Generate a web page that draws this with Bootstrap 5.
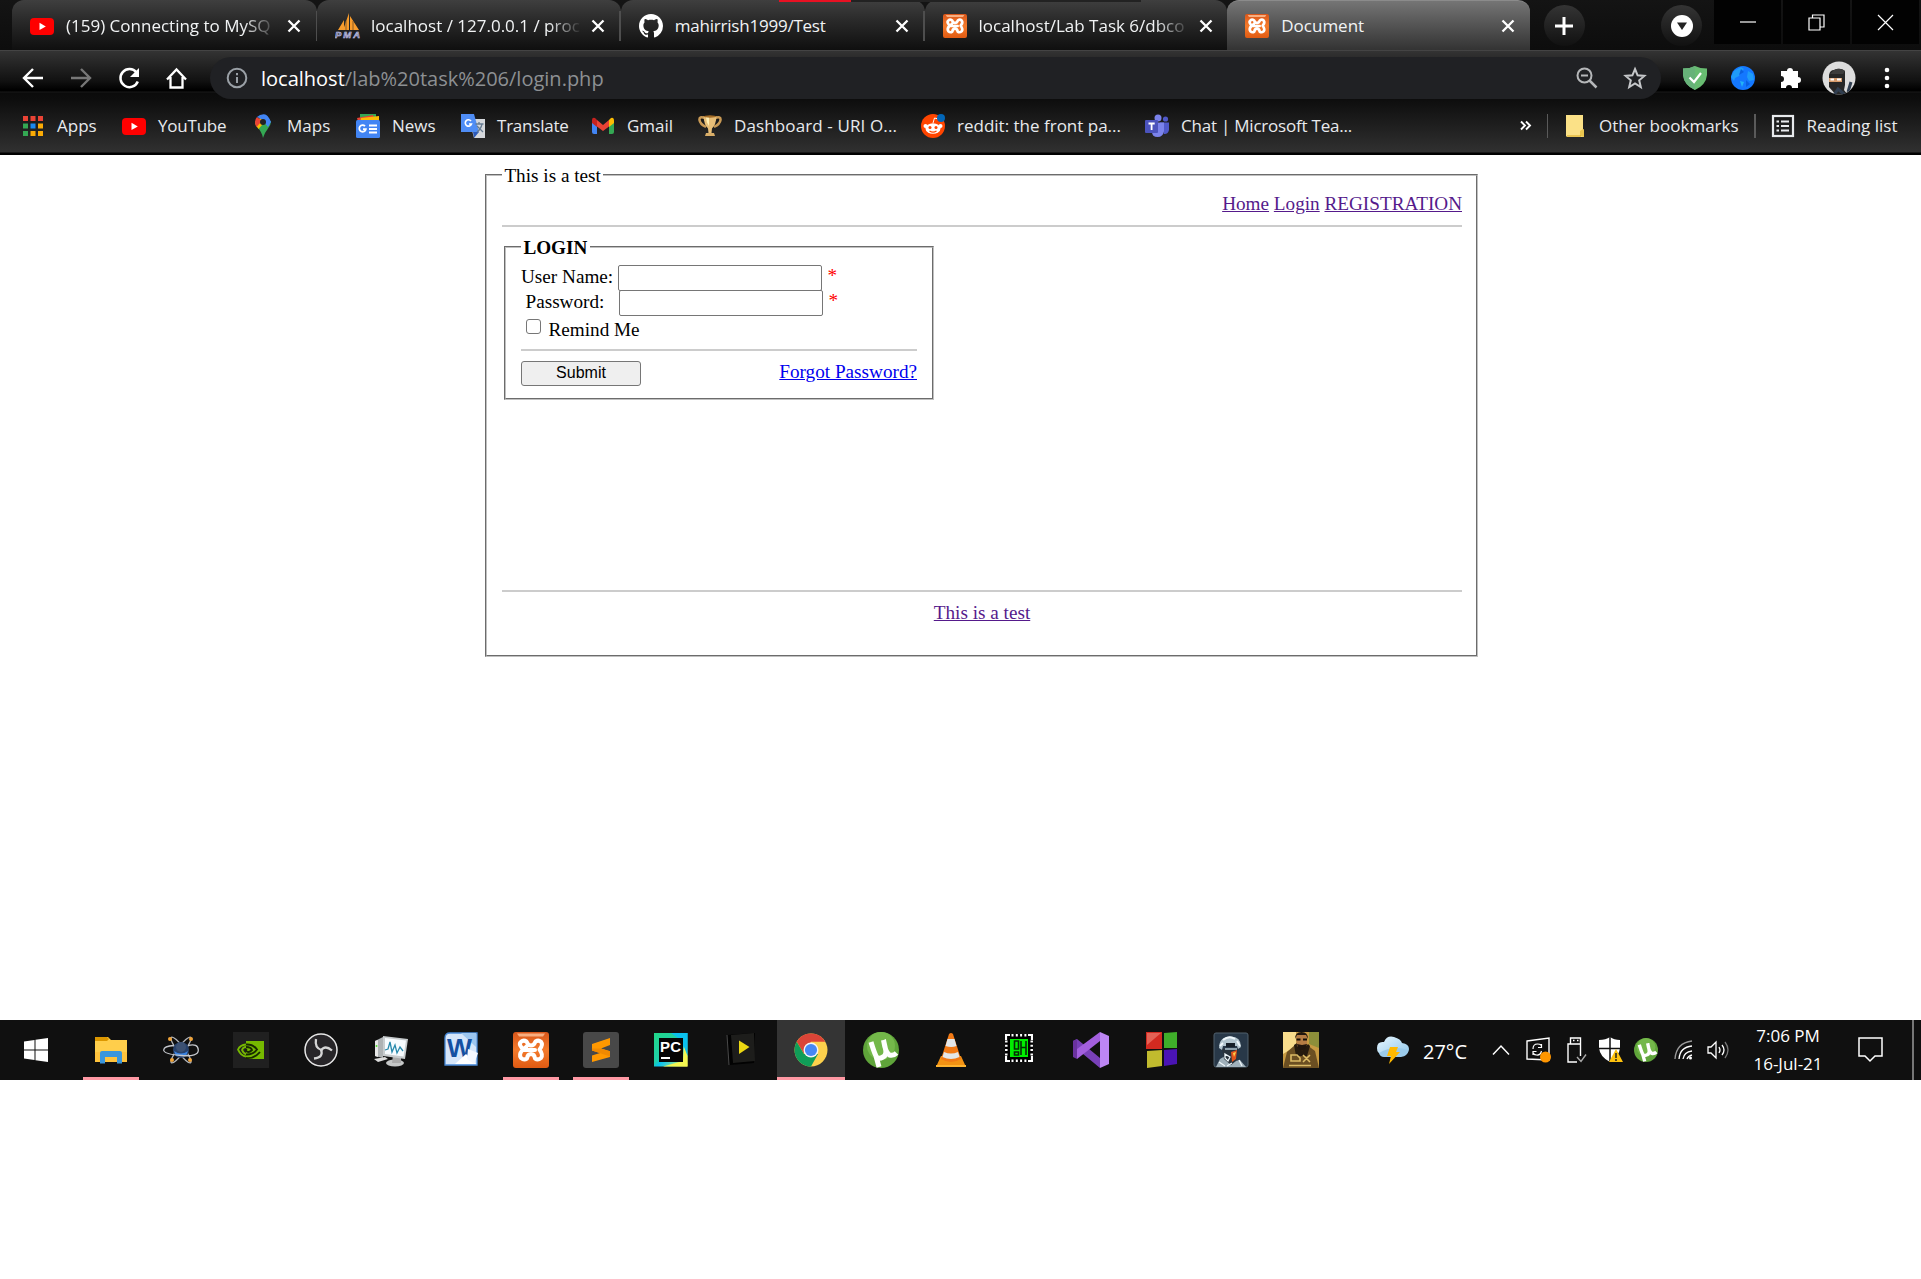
<!DOCTYPE html>
<html lang="en">
<head>
<meta charset="utf-8">
<meta name="viewport" content="width=device-width, initial-scale=1">
<title>Document</title>
<link rel="stylesheet" href="https://cdn.jsdelivr.net/npm/bootstrap@5.3.0/dist/css/bootstrap.min.css">
<style>
  body{background:#fff;color:#000;overflow:hidden;font-family:"Open Sans","Noto Sans",sans-serif;font-size:17px;line-height:24px}
  svg{display:block;flex:none}
  .strip{height:50px;background:linear-gradient(#141414,#0d0d0d);padding-left:12px}
  .tab-item{width:303.75px;height:50px;padding:1px 0 0 18px;background:linear-gradient(#3f3f3f,#2a2a2a 40%,#0f0f0f);border-radius:12px 12px 0 0;color:#f1f3f4;border-right:0;flex:none}
  .tab-first{width:305px}
  .tab-item .tab-name{width:211px;margin-left:12px;white-space:nowrap}
  .tab-item .fade-end{-webkit-mask-image:linear-gradient(90deg,#000 84%,transparent)}
  .tab-item .tab-x{margin-left:9px}
  .tab-first .tab-x{margin-left:10px}
  .tab-sep{width:1.5px;height:30px;background:#4e4e4e;margin-left:auto}
  .tab-on{width:302.500px;background:linear-gradient(#757575,#5a5a5a 40%,#333);border-top:1px solid #8b8b8b;padding-top:0}
  .round-btn{width:41px;height:41px;border-radius:50%;background:linear-gradient(#343434,#111);margin-top:5px;flex:none}
  .win-btns{width:207px;height:44px;margin-left:12px}
  .win-btns>div{width:67px;background:#020202;margin-right:2px}
  .edge-marks{left:779px;top:0;height:2px;width:362px;background:linear-gradient(90deg,#e81123 72px,#222 72px)}
  .toolbar-row{height:49px;border-top:1px solid #444;background:linear-gradient(#333,#111 30px,#000 39px,#000 40px,#191919 41px,#0b0b0b 42px,#0d0d0d)}
  .nav-icons{padding-left:21px;width:210px;padding-top:5px}
  .address{width:1451px;height:42px;margin-top:6px;border-radius:21px;background:#202124;padding:0 14px 0 15px;color:#8d9093;font-size:20px;line-height:30px}
  .address b{font-weight:400;color:#fff}
  .ext-icons{padding-top:5px}
  .bookmarks{height:56px;background:linear-gradient(#0d0d0d,#303030 53px,#000 54px);padding:0 0 2px 21px;color:#e8eaed;white-space:nowrap}
  .bookmarks .bm{gap:12px;flex:none}
  .snug{letter-spacing:-.22px}
  .bm-sep{width:1.5px;height:24px;background:#5a5a5a}
  .page-view{height:865px;padding:9px 0 0 485px;font-family:"Liberation Serif",serif;font-size:19.2px;line-height:22px}
  .page-view fieldset{border:2px groove #c0c0c0;margin:0}
  .page-view legend{float:none;width:auto;font-size:19.2px;line-height:24px;height:22px;margin:0;padding:0 2.4px;white-space:nowrap}
  .page-view a{color:#551a8b;text-decoration:underline}
  .page-view a.fresh{color:#00e}
  .outer-set{width:993px;height:493px;padding:7px 14px 0 15px}
  .inner-set{width:430px;height:164px;padding:7px 15px 0;margin:9px 0 0 2px!important}
  .rule{height:2px;background:#ccc}
  .text-box{width:203.5px;height:25.5px;border:1px solid #767676;border-radius:2px;padding:0 3px;outline:0;background:#fff}
  .tick{width:15px;height:15px;border:1.4px solid #767676;border-radius:3px;appearance:none;margin:3px 7.5px 0 5px;background:#fff}
  .star{color:red;margin-left:6px}
  .send{width:120px;height:25px;border:1px solid #767676;border-radius:3px;background:#efefef;font:16px/21px "Liberation Sans",sans-serif;padding:0 0 2px}
  .taskbar{height:60px;background:#101010;color:#fff}
  .start-cell{width:76px;padding-left:24px}
  .app-cell{width:70px;height:60px;padding:0 7px}
  .app-cell>div{height:60px;border-bottom:3px solid transparent;padding-top:3px}
  .app-cell.open>div{border-color:#ff99a4}
  .app-cell.active{padding:0 1px}
  .app-cell.active>div{background:#343434}
  .clock{line-height:28px;font-size:17px;width:90px;margin-left:13px}
  .temp{font-size:20px}
</style>
</head>
<body>
<svg width="0" height="0" class="position-absolute">
  <defs>
    <linearGradient id="gOr" x2="0" y2="1"><stop offset="0" stop-color="#d9561a"/><stop offset=".5" stop-color="#f47b2c"/><stop offset="1" stop-color="#e05a12"/></linearGradient>
    <linearGradient id="gTile" x2="1" y2="1"><stop stop-color="#21d789"/><stop offset=".45" stop-color="#1fd0a8"/><stop offset=".55" stop-color="#07c3f2"/><stop offset="1" stop-color="#fcf84a"/></linearGradient>
    <linearGradient id="gSky" x2="1" y2="1"><stop stop-color="#e8f6ff"/><stop offset="1" stop-color="#8ec7ea"/></linearGradient>
    <symbol id="xampp" viewBox="0 0 36 36"><rect width="36" height="36" rx="3" fill="url(#gOr)"/><path d="M4 1.500h28l-2 3H6z" fill="#f8ae80"/><path d="M13.500 14.500Q11 18 8.500 15.500Q5.500 12 8 9.800Q10.500 7.500 13.500 9.500Q15 13.500 18 13.500Q21 13.500 22.500 9.500Q25.500 7.500 28 9.800Q30.500 13 26.500 17.500Q30.500 23 28 26Q25 28.500 22 26.500Q21.500 22 18 22Q14.500 22 14 26.500Q11 28.500 8 26Q5.500 22.500 9.500 18H22" fill="none" stroke="#fff" stroke-width="4" stroke-linecap="round" stroke-linejoin="round"/></symbol>
    <symbol id="yt" viewBox="0 0 24 24"><rect y="4" width="24" height="17" rx="4" fill="red"/><path d="M9.500 8.800v7.200l6.300-3.600z" fill="#fff"/></symbol>
    <symbol id="cross" viewBox="0 0 14 14"><path d="M1.500 1.500l11 11M12.500 1.500l-11 11" stroke="#fff" stroke-width="2.300"/></symbol>
    <symbol id="ut" viewBox="0 0 36 36"><circle cx="18" cy="18" r="18" fill="#5fa43a"/><circle cx="18" cy="14" r="14" fill="#74b84a"/><path d="M8 10q3 10 5 14t7 1q4-2 2.500-8l-2-9q2 13 6 15q4 1 7-2M13 24l3 11" stroke="#fff" stroke-width="5" fill="none"/></symbol>
  </defs>
</svg>

<!-- Tab strip -->
<header>
<div class="strip d-flex">
  <div class="tab-item tab-first d-flex align-items-center"><svg width="24" height="24"><use href="#yt"/></svg><div class="tab-name fade-end">(159) Connecting to MySQ</div><svg class="tab-x" width="14" height="14"><use href="#cross"/></svg><div class="tab-sep"></div></div>
  <div class="tab-item d-flex align-items-center"><svg width="26" height="26" viewBox="0 0 26 26"><path d="M3 17l6-10v10zM8 17L14 0v17zM15 3l9 14h-9z" fill="#f89c2c"/><path d="M11 8v9M18 8v9" stroke="#8a5a26"/><text x="0" y="25" font-family="Liberation Sans" font-size="9.500" font-weight="700" font-style="italic" fill="#5a5f9c" stroke="#d5d5ee" stroke-width=".5" textLength="25">PMA</text></svg><div class="tab-name fade-end" style="margin-left:10px">localhost / 127.0.0.1 / proc</div><svg class="tab-x" width="14" height="14"><use href="#cross"/></svg><div class="tab-sep"></div></div>
  <div class="tab-item d-flex align-items-center"><svg width="24" height="24" viewBox="0 0 16 16" fill="#fff"><path d="M8 0C3.580 0 0 3.580 0 8c0 3.540 2.290 6.530 5.470 7.590.4.070.55-.17.55-.38 0-.19-.01-.82-.01-1.490-2.010.37-2.530-.49-2.690-.94-.09-.23-.48-.94-.82-1.130-.28-.15-.68-.52-.01-.53.63-.01 1.080.58 1.230.82.72 1.210 1.870.87 2.330.66.07-.52.28-.87.51-1.070-1.780-.2-3.640-.89-3.640-3.950 0-.87.31-1.590.82-2.150-.08-.2-.36-1.020.08-2.120 0 0 .67-.21 2.200.82.64-.18 1.320-.27 2-.27s1.360.09 2 .27c1.530-1.040 2.200-.82 2.200-.82.44 1.100.16 1.920.08 2.120.51.56.82 1.270.82 2.150 0 3.070-1.870 3.750-3.650 3.950.29.25.54.73.54 1.480 0 1.070-.01 1.930-.01 2.200 0 .21.15.46.55.38A8 8 0 0 0 16 8c0-4.420-3.580-8-8-8z"/></svg><div class="tab-name snug">mahirrish1999/Test</div><svg class="tab-x" width="14" height="14"><use href="#cross"/></svg><div class="tab-sep"></div></div>
  <div class="tab-item d-flex align-items-center" style="width:302.750px"><svg width="24" height="24"><use href="#xampp"/></svg><div class="tab-name fade-end">localhost/Lab Task 6/dbco</div><svg class="tab-x" width="14" height="14"><use href="#cross"/></svg></div>
  <div class="tab-item tab-on d-flex align-items-center"><svg width="24" height="24"><use href="#xampp"/></svg><div class="tab-name">Document</div><svg class="tab-x" width="14" height="14"><use href="#cross"/></svg></div>
  <div class="round-btn d-flex align-items-center justify-content-center" style="margin-left:14px"><svg width="18" height="18"><path d="M9 0v18M0 9h18" stroke="#fff" stroke-width="3"/></svg></div>
  <div class="round-btn d-flex align-items-center justify-content-center ms-auto"><svg width="22" height="22"><circle cx="11" cy="11" r="11" fill="#fff"/><path d="M6 7.500h10L11 15z" fill="#222"/></svg></div>
  <div class="win-btns d-flex flex-shrink-0">
    <div class="d-flex align-items-center justify-content-center"><svg width="16" height="16"><path d="M0 8h16" stroke="#fff" stroke-width="1.200"/></svg></div>
    <div class="d-flex align-items-center justify-content-center"><svg width="17" height="17" fill="none" stroke="#fff" stroke-width="1.200"><path d="M1 4h11v12H1zM4.500 4V1H16v12h-4"/></svg></div>
    <div class="d-flex align-items-center justify-content-center me-0"><svg width="17" height="17"><path d="M1 1l15 15M16 1L1 16" stroke="#fff" stroke-width="1.200"/></svg></div>
  </div>
</div>
<div class="edge-marks position-absolute"></div>

<!-- Toolbar -->
<div class="toolbar-row d-flex">
  <div class="nav-icons d-flex align-items-center gap-4">
    <svg width="24" height="24" fill="none" stroke="#fff" stroke-width="2.400"><path d="M22 12H3M12 3l-9 9 9 9"/></svg>
    <svg width="24" height="24" fill="none" stroke="#777" stroke-width="2.400"><path d="M2 12h19M12 3l9 9-9 9"/></svg>
    <svg width="24" height="24" fill="none" stroke="#fff" stroke-width="2.500"><path d="M19.500 6.500a9 9 0 1 0 1.300 9"/><path d="M22 2v9h-9z" fill="#fff" stroke="none"/></svg>
    <svg width="24" height="24" fill="none" stroke="#fff" stroke-width="2.300"><path d="M2 13.500L11.500 3.500 21 13.500M5.500 11v10.500h12V11"/></svg>
  </div>
  <div class="address d-flex align-items-center">
    <svg width="24" height="24" fill="none" stroke="#9aa0a6" stroke-width="2"><circle cx="12" cy="12" r="9.300"/><path d="M12 11v6M12 7v2.200"/></svg>
    <div class="flex-grow-1" style="margin-left:12px;padding-top:1px"><b>localhost</b>/lab%20task%206/login.php</div>
    <svg width="24" height="24" fill="none" stroke="#b5b7b9" stroke-width="2"><circle cx="9.500" cy="9.500" r="7"/><path d="M6 9.500h7"/><path d="M14.500 14.500l7 7" stroke-width="2.500"/></svg>
    <svg class="ms-4" width="24" height="24" fill="none" stroke="#c5c7c9" stroke-width="2"><path d="M12 3l2.600 6.300 6.800.6-5.200 4.400 1.600 6.700L12 17.400 6.200 21l1.600-6.700-5.200-4.400 6.800-.6z"/></svg>
  </div>
  <div class="ext-icons d-flex align-items-center">
    <svg style="margin-left:22px" width="24" height="24"><path d="M12 0Q17 2.500 24 2.500V9Q23 19 12 24Q1 19 0 9V2.500Q7 2.500 12 0z" fill="#68bc71"/><path d="M12 0Q7 2.500 0 2.500V9Q1 19 12 24z" fill="#67b279"/><path d="M6.500 11.500l4.500 4.500 7-9" fill="none" stroke="#fff" stroke-width="2.200"/></svg>
    <svg class="ms-4" width="24" height="24"><circle cx="12" cy="12" r="12" fill="#1478ff"/><path d="M3 5l7-4 3 2-3 3-2 4-4 2-1 3-3-4zM17 5l5 3 1 6-5 1-2-4z" fill="#1f9cf8"/><path d="M9 15l4 1-2 5z" fill="#23b3f5"/><path d="M10 3l3 3-5 3zM15 14l4 4-4 3z" fill="#0a60e0"/></svg>
    <svg style="margin-left:25px" width="22" height="22" fill="#fff"><path d="M7 4a3 3 0 0 1 6 0h5v6a3 3 0 0 1 0 6v5h-6a3 3 0 0 0-6 0H1v-6a3 3 0 0 0 0-6V4z"/></svg>
    <svg style="margin-left:20px" width="34" height="34"><defs><clipPath id="face"><circle cx="17" cy="17" r="16.500"/></clipPath></defs><g clip-path="url(#face)"><rect width="34" height="34" fill="#ddd"/><path d="M7 14Q8 9 12 9Q17 6 23 10V24L22 29L26 34H14L7 26z" fill="#272727"/><path d="M12 9Q19 6 23 10L21 13H8z" fill="#3d3d3d"/><path d="M7 17h13v4H7z" fill="#d79b6b"/><path d="M8.500 18.500h3.500M15 18.500h4" stroke="#fff" stroke-width="2"/><path d="M12 34l4-6 7 6M29 21l-3 10" stroke="#303e50" stroke-width="3" fill="none"/></g></svg>
    <svg style="margin-left:28px" width="6" height="22" fill="#fff"><circle cx="3" cy="3" r="2.300"/><circle cx="3" cy="11" r="2.300"/><circle cx="3" cy="19" r="2.300"/></svg>
  </div>
</div>

<!-- Bookmarks -->
<nav class="bookmarks d-flex align-items-center">
  <div class="bm d-flex align-items-center" style="width:101px"><svg width="24" height="24"><path d="M2 2h5v5H2zM9.500 2h5v5h-5zM17 2h5v5h-5z" fill="#ea4335"/><path d="M2 9.500h5v5H2z" fill="#34a853"/><path d="M9.500 9.500h5v5h-5z" fill="#1a88f0"/><path d="M17 9.500h5v5h-5zM9.500 17h5v5h-5zM17 17h5v5h-5z" fill="#fbab05"/><path d="M2 17h5v5H2z" fill="#34a853"/></svg>Apps</div>
  <div class="bm d-flex align-items-center snug" style="width:129px"><svg width="24" height="24"><use href="#yt"/></svg>YouTube</div>
  <div class="bm d-flex align-items-center" style="width:105px"><svg width="24" height="24"><path d="M12 24Q11 18 6 13Q4 10 4 7l8 1 8-1q0 4-3 7.500T12 24z" fill="#34a853"/><path d="M4.200 9Q5 12 7.500 15l8-9L9 4z" fill="#fbbc04"/><path d="M4 8Q4 5 6 3l5 4-5.500 6Q4 11 4 8z" fill="#ea4335"/><path d="M6 3Q9 0 13 .2T20 8l-3 5-4-5-3-3z" fill="#4285f4"/><circle cx="12" cy="8" r="3" fill="#222"/></svg>Maps</div>
  <div class="bm d-flex align-items-center" style="width:105px"><svg width="24" height="24"><path d="M4 0h16v8H4z" fill="#34a853"/><path d="M1 4l16-3 2 6-16 4z" fill="#ea4335"/><path d="M5 4l18-2v7H4z" fill="#fbbc04"/><rect y="6" width="24" height="18" rx="1.500" fill="#4285f4"/><path d="M9 12.200a3.300 3.300 0 1 0 .8 3H7M13 11.500h8M13 15h8M13 18.500h8" fill="none" stroke="#fff" stroke-width="1.800"/></svg>News</div>
  <div class="bm d-flex align-items-center snug" style="width:130px"><svg width="24" height="24"><path d="M8 5h16v19H13z" fill="#d5d8dc"/><path d="M13 24l-1-6h6z" fill="#2b59b8"/><path d="M0 0h13l5 18H0z" fill="#4f8df5"/><path d="M10 7a3.200 3.200 0 1 0 .5 3H8" fill="none" stroke="#fff" stroke-width="1.600"/><path d="M14.500 10h8M18 8v2M21 10q-1 5-5 8M16 12l6 6" stroke="#667b91" fill="none" stroke-width="1.300"/></svg>Translate</div>
  <div class="bm d-flex align-items-center" style="width:107px"><svg width="24" height="24"><path d="M1 7h5v13H3q-2 0-2-2z" fill="#4285f4"/><path d="M18 7h5v11q0 2-2 2h-3z" fill="#34a853"/><path d="M18 6l2-2q3-1 3 3v2l-5 4z" fill="#fbbc04"/><path d="M6 6l6 5 6-5v6.500L12 17l-6-4.500z" fill="#ea4335"/><path d="M1 9V6q0-3 3-2l2 2v7z" fill="#c5221f"/></svg>Gmail</div>
  <div class="bm d-flex align-items-center" style="width:223px;letter-spacing:.12px"><svg width="24" height="24"><path d="M7 4Q1 2 1.500 6t6.500 7M17 4q6-2 5.500 2T16 13" fill="none" stroke="#c99a55" stroke-width="2.500"/><path d="M5.500 2h13Q18 11 14 14.500l-.5 4.500h-3l-.5-4.500Q6 11 5.500 2z" fill="#e8bf78"/><path d="M8 3h3v9Q8 8 8 3z" fill="#fff0b5"/><ellipse cx="12" cy="2.500" rx="6.500" ry="1.200" fill="#a26b26"/><path d="M8 19h8l1 3H7z" fill="#d8ad68"/></svg>Dashboard - URI O...</div>
  <div class="bm d-flex align-items-center" style="width:224px"><svg width="24" height="24"><circle cx="12" cy="12" r="12" fill="#ff4500"/><ellipse cx="12" cy="14.500" rx="7.500" ry="5.300" fill="#fff"/><circle cx="4.500" cy="12" r="2" fill="#fff"/><circle cx="19.500" cy="12" r="2" fill="#fff"/><path d="M12 9l1.500-5 4 1" stroke="#fff" fill="none"/><circle cx="9" cy="13.500" r="1.500" fill="#ff4500"/><circle cx="15" cy="13.500" r="1.500" fill="#ff4500"/><path d="M8.500 17q3.500 2.300 7 0" stroke="#ff4500" fill="none" stroke-width="1.200"/><circle cx="20" cy="4" r="4" fill="#0266b8"/></svg>reddit: the front pa...</div>
  <div class="bm d-flex align-items-center snug" style="width:230px"><svg width="24" height="24"><circle cx="20.500" cy="5" r="2.600" fill="#5059c9"/><circle cx="13" cy="4" r="3.500" fill="#7b83eb"/><path d="M15 8.500h9V16q-1 4.500-5 4z" fill="#5059c9"/><path d="M7 8.500h12V17q-1 6-6.500 6T7 18z" fill="#7b83eb"/><rect y="6" width="13" height="13" rx="1" fill="#4b53bc"/><path d="M3.500 9.500h6.200M6.600 9.500V16" stroke="#fff" stroke-width="1.800"/></svg>Chat | Microsoft Tea...</div>
  <svg class="ms-auto" width="12" height="12" fill="none" stroke="#fff" stroke-width="1.900"><path d="M1 1.500L5 5.500 1 9.500M6 1.500l4 4-4 4"/></svg>
  <div class="bm-sep" style="margin-left:15px"></div>
  <div class="bm d-flex align-items-center" style="width:187px;margin-left:15px"><svg width="24" height="24"><path d="M3 1h17v14l1 1v7H4l-1-1z" fill="#fbe187"/><path d="M20 15l-3 2v5l4 1v-7z" fill="#eac64f"/><path d="M4 22h14" stroke="#d9a91e"/></svg>Other bookmarks</div>
  <div class="bm-sep ms-1"></div>
  <div class="bm d-flex align-items-center" style="width:150.500px;margin-left:15px"><svg width="24" height="24" fill="none" stroke="#e8eaed" stroke-width="2.200"><rect x="2" y="2" width="20" height="20"/><path d="M10 7.500h8M10 12h8M10 16.500h8M5.500 7.500H8M5.500 12H8M5.500 16.500H8" stroke-width="2"/></svg>Reading list</div>
</nav>
</header>

<!-- Page content -->
<main class="page-view">
  <fieldset class="outer-set">
    <legend>This is a test</legend>
    <div class="text-end"><a href="#">Home</a> <a href="#">Login</a> <a href="#">REGISTRATION</a></div>
    <div class="rule" style="margin-top:10px"></div>
    <fieldset class="inner-set">
      <legend><b>LOGIN</b></legend>
      <div class="d-flex" style="height:25px"><span style="width:97px;padding-top:1px">User Name:</span><input class="text-box" type="text"><span class="star">*</span></div>
      <div class="d-flex"><span style="width:98px;padding-left:4.500px;padding-top:1px">Password:</span><input class="text-box" type="password"><span class="star">*</span></div>
      <div class="d-flex" style="height:33.500px"><input class="tick" type="checkbox"><span style="padding-top:3px">Remind Me</span></div>
      <div class="rule"></div>
      <div class="d-flex justify-content-between" style="margin-top:10px"><button class="send">Submit</button><a class="fresh" href="#">Forgot Password?</a></div>
    </fieldset>
    <div class="rule" style="margin-top:190px"></div>
    <div class="text-center" style="margin-top:10px"><a href="#">This is a test</a></div>
  </fieldset>
</main>

<!-- Taskbar -->
<footer class="taskbar d-flex">
  <div class="start-cell d-flex align-items-center"><svg width="24" height="24" fill="#fff"><path d="M0 3.500l10.500-1.500v9.500H0zM11.500 1.800L24 0v11.500H11.500zM0 12.500h10.500V22L0 20.500zM11.500 12.500H24V24l-12.500-1.800z"/></svg></div>
  <div class="app-cell open"><div class="d-flex align-items-center justify-content-center"><svg width="36" height="36"><path d="M2 5h13l3 3h16v22H2z" fill="#ffce4b"/><path d="M2 5h12l2 2-2 2H2z" fill="#dc9700"/><path d="M2 20h32v10H2z" fill="#ffc33c"/><path d="M7 31.500V21q0-2 2-2h18q2 0 2 2v10.500h-5V25h-12v6.500z" fill="#3a96dd"/></svg></div></div>
  <div class="app-cell"><div class="d-flex align-items-center justify-content-center"><svg width="36" height="36" fill="none"><g stroke="#b4b7bc" stroke-width="1.300"><ellipse cx="18" cy="18" rx="16" ry="3.500" transform="rotate(53 18 18)"/><ellipse cx="18" cy="18" rx="16" ry="3.500" transform="rotate(-53 18 18)"/></g><circle cx="18" cy="18" r="8" fill="#27416b"/><path d="M11 19q7 5 14 0l-2 5H13z" fill="#3b83df"/><circle cx="18" cy="15" r="5" fill="#3c5173"/><path d="M11 13.500Q1 14 .700 18T18 23.500 35.300 18 25 13.500" stroke="#c4c7cc" stroke-width="1.300"/><g fill="#f0a43a"><circle cx="7" cy="7" r="2"/><circle cx="28" cy="7" r="2"/><circle cx="9" cy="28" r="2"/><circle cx="27" cy="28" r="2"/></g></svg></div></div>
  <div class="app-cell"><div class="d-flex align-items-center justify-content-center"><svg width="36" height="36" fill="none"><path d="M0 0h36v36H0z" fill="#202020"/><path d="M13 9h18v18H13z" fill="#76b900"/><g stroke="#76b900" stroke-width="1.800"><path d="M13 12.500Q7 13 5 17.500Q8 24 13 24.500"/><path d="M13 15q-3 0-4 3q2 4 4 4"/></g><g stroke="#172900" stroke-width="1.900"><path d="M13 12.500q7-.5 11 5-4 5.500-11 5"/><path d="M13 15q5 0 6 3-3 3-5 1.500T14 17M13 26q8 1 14-6"/></g></svg></div></div>
  <div class="app-cell"><div class="d-flex align-items-center justify-content-center"><svg width="36" height="36" fill="none"><circle cx="18" cy="18" r="16" fill="#272528" stroke="#e7e7e7" stroke-width="1.500"/><g stroke="#d5d5d5" stroke-width="2.300"><path d="M18.500 18q-7-2-5.500-11"/><path d="M18 18.500q4-6 11 0"/><path d="M18 17.500q3 8-7 9"/></g></svg></div></div>
  <div class="app-cell"><div class="d-flex align-items-center justify-content-center"><svg width="36" height="36"><path d="M2 9l8-4v21l-8-2z" fill="#aeb2b4"/><path d="M2 9l3-1v17l-3-1z" fill="#e7e7e7"/><circle cx="3.500" cy="14" r="1" fill="#4de12d"/><path d="M1 27l11-2 3 2-10 3z" fill="#ddd"/><ellipse cx="22" cy="31" rx="9" ry="3.500" fill="#c5c7c7"/><path d="M20 23h8v8h-9z" fill="#aaa"/><path d="M10 4l25 3-3 20-22-3z" fill="#c8ccce"/><path d="M12 6l21 2.500-2.500 16L12 22z" fill="#f7fbfe"/><path d="M12 18l3-1 2-7 2 10 3-7 2 8 3-6 3 4" fill="none" stroke="#2789ac" stroke-width="1.300"/></svg></div></div>
  <div class="app-cell"><div class="d-flex align-items-center justify-content-center"><svg width="36" height="36"><path d="M7 1h27v32H2V6q0-5 5-5z" fill="#d6e6fa" stroke="#498bd9" stroke-width="1.300"/><path d="M18 1h15v14z" fill="#9dc6ef"/><text x="4" y="25" font-family="Liberation Sans" font-size="25" font-weight="700" fill="#1450a2" textLength="25" lengthAdjust="spacingAndGlyphs">W</text><path d="M12 32l11-10 10 10z" fill="#fff"/><path d="M25 17l10 4-4 11-7-5z" fill="#f3f7ff"/></svg></div></div>
  <div class="app-cell open"><div class="d-flex align-items-center justify-content-center"><svg width="36" height="36"><use href="#xampp"/></svg></div></div>
  <div class="app-cell open"><div class="d-flex align-items-center justify-content-center"><svg width="36" height="36"><rect width="36" height="36" rx="3" fill="#484848"/><path d="M27 6v7l-9 3.500 9 2.700V25L9 30v-6.500l8-2.500-8-2.500V12z" fill="#ff9800"/><path d="M18 16.500l9 2.700v5.300L9 18.500l-.1-2z" fill="#f08900"/></svg></div></div>
  <div class="app-cell"><div class="d-flex align-items-center justify-content-center"><svg width="36" height="36"><path d="M1 1h33.500v33.500H1z" fill="url(#gTile)"/><path d="M18 1h16.500v24L28 8z" fill="#0ac1ee"/><path d="M10 34.500L30 29l1-14 3.500 9v10.500z" fill="#f4f650"/><path d="M6 6h24v24H6z" fill="#050505"/><text x="7" y="19.500" font-family="Liberation Sans" font-size="15" font-weight="700" fill="#fff" textLength="21">PC</text><path d="M8 26h9" stroke="#fff" stroke-width="2"/></svg></div></div>
  <div class="app-cell"><div class="d-flex align-items-center justify-content-center"><svg width="36" height="36"><path d="M4 3l28-2-1 30-25 2z" fill="#020202"/><path d="M8 3l23-2 1 28-22 2z" fill="#1d1d1b"/><path d="M4 3l2 30" stroke="#494949"/><path d="M16 8.500L26.500 15 16 22z" fill="#ecd812"/></svg></div></div>
  <div class="app-cell open active"><div class="d-flex align-items-center justify-content-center"><svg width="36" height="36"><circle cx="18" cy="18" r="16.500" fill="#fcd04c"/><path d="M3.700 9.800a16.500 16.500 0 0 1 28.600 0H18l-7 12z" fill="#db4437"/><path d="M3.700 9.800a16.500 16.500 0 0 0 14.300 24.700L25 22 11 22z" fill="#109d58"/><circle cx="18" cy="18" r="7.500" fill="#f4f4f4"/><circle cx="18" cy="18" r="6.100" fill="#4688f4"/></svg></div></div>
  <div class="app-cell"><div class="d-flex align-items-center justify-content-center"><svg width="36" height="36"><use href="#ut"/></svg></div></div>
  <div class="app-cell"><div class="d-flex align-items-center justify-content-center"><svg width="36" height="36"><path d="M8 24h20l5 11H3z" fill="#f39213"/><path d="M3 33h30v2H3z" fill="#ffb32f"/><path d="M16 2q2-2 4 0l8 25q-10 6-20 0z" fill="#f17915"/><path d="M14.500 7h7l2 7q-5 2-11 0zM11 20q7 3 14 0l1.500 5q-8.500 4-17 0z" fill="#e3e6e9"/></svg></div></div>
  <div class="app-cell"><div class="d-flex align-items-center justify-content-center"><svg style="margin:0 5px 5px 0" width="28" height="28"><path d="M0 0h28v28H0z" fill="#000"/><path d="M6.500 1.300h16M6.500 26.700h16M1.300 6.500v16M26.700 6.500v16" stroke="#fff" stroke-width="2.500" stroke-dasharray="2 2.300"/><path d="M1 6V1h4M23 1h4v5M27 22v5h-4M5 27H1v-5" fill="none" stroke="#fff" stroke-width="2.200"/><path d="M5 5h18v18H5z" fill="#0e0"/><path d="M9.500 7h4v8h-4zM9.500 18h4v3h-4zM16 7v14M21 7v14M16 13.500h5" stroke="#052b05" stroke-width="1.600" fill="none"/></svg></div></div>
  <div class="app-cell"><div class="d-flex align-items-center justify-content-center"><svg width="36" height="36"><path d="M0 9l4-2 23 19v10L4 17v9l-4-2z" fill="#7840b8"/><path d="M0 9l4-2v20l-4-2z" fill="#6a329f"/><path d="M4 27l23-18V0L4 17z" fill="#a35fde"/><path d="M27 0l9 4v28l-9 4z" fill="#bd86f4"/></svg></div></div>
  <div class="app-cell"><div class="d-flex align-items-center justify-content-center"><svg width="36" height="36"><path d="M3 0h16v17H3z" fill="#d32a20"/><path d="M21 1l13-1v16H21z" fill="#3fae2a"/><path d="M4 19l15-1v16L4 36z" fill="#c1bb2e"/><path d="M21 18l13-1v15l-13 2z" fill="#4a14b4"/><path d="M4 1h14L4 13z" fill="#f0887a" opacity=".6"/></svg></div></div>
  <div class="app-cell"><div class="d-flex align-items-center justify-content-center"><svg width="36" height="36"><rect x="1" y="1" width="34" height="34" rx="2" fill="#283848" stroke="#51606c"/><path d="M3 35l4-8 5-3 6 6 9-2 6 7z" fill="#9fb0ba"/><path d="M9 17l16 0-2 12-5 4-7-6z" fill="#29333c"/><path d="M6 16Q6 5 17 4.500T28 15l-3 2-1-3H10l-1 4z" fill="#b3c5ce"/><path d="M10 8q6-5 12-1M7 14l3-3M24 9l3 5" stroke="#eef6fa" stroke-width="1.800" fill="none"/><path d="M13 11h9v4h-9z" fill="#161f28"/><path d="M12 17h12" stroke="#8fa2ad" stroke-width="2"/><path d="M12 22l5 3-2 4-3-3zM6 30l6 4M14 34l5-3M26 28l3 6" stroke="#eef6fa" stroke-width="1.300" fill="none"/><path d="M18 20l6-2-1 9-4 3z" fill="#e0531b"/><path d="M20 21l3-1-2 5z" fill="#ffd34a"/></svg></div></div>
  <div class="app-cell"><div class="d-flex align-items-center justify-content-center"><svg width="36" height="36"><path d="M0 0h36v36H0z" fill="#c79a42"/><path d="M0 0h13v14L0 22z" fill="#f8dc8c"/><path d="M26 0h10v16l-10-4z" fill="#8d8f3a"/><path d="M0 36l4-16 8-7h12l8 6 4 17z" fill="#6b4f22"/><path d="M11 13l3-2 5 8 6-7 2 2-3 10H13z" fill="#241a0e"/><path d="M13 4q5-6 11 0v9l-5 5-5-4z" fill="#b47c44"/><path d="M12 7q0-7 6.500-7T25 7l-2-4h-9zM14 12l5 1 5-1-1 4-4 3-4-3z" fill="#20160d"/><path d="M13.500 7.500h4M20 7.500h4" stroke="#130e07" stroke-width="2"/><path d="M8 23h6l3 3v3H8zM20 23l7 7M27 23l-7 7M6 33.500h22" stroke="#dcbb66" stroke-width="1.600" fill="none"/></svg></div></div>

  <div class="d-flex align-items-center" style="margin-left:41px">
    <svg width="32" height="28"><path d="M7 18Q0 19 0 12T7 6Q10-1 17 1t8 6q7 1 7 6t-6 7z" fill="url(#gSky)"/><path d="M2 17q14-8 29-3 0 6-7 7H7q-4 0-5-4z" fill="#9bcbeb"/><path d="M13 11h8l-2 5h4l-11 12 2-8h-4z" fill="#ffb900"/></svg>
    <span class="temp" style="width:69px;margin-left:14px;padding-top:3px">27°C</span>
    <svg width="18" height="12" fill="none" stroke="#fff" stroke-width="1.500"><path d="M1 10.500L9 2l8 8.500"/></svg>
    <svg style="margin-left:16px" width="25" height="26" fill="none" stroke="#fff" stroke-width="1.400"><path d="M1 4l22-3v22L1 22z"/><path d="M7 12q0-5 4.500-5t4 3M15.500 7v3.500H12M15.500 14q-1 4.500-5 4t-3.500-4M7 18v-3.500h3.500" stroke-width="1.200"/><circle cx="19.500" cy="20" r="5.500" fill="#ff9600" stroke="none"/></svg>
    <svg style="margin-left:16px" width="20" height="26" fill="none" stroke="#fff" stroke-width="1.400"><path d="M3.500 7V1h10v6M13.500 19V7H1v18h9M6 3.500h1.500M10 3.500h1.500"/><path d="M10 20l4 4.500 5-7" stroke="#aaa"/></svg>
    <svg style="margin-left:12px" width="24" height="26"><path d="M11 0q4 3 10 3v8q-1 9-10 14Q1 20 0 11V3q7 0 11-3z" fill="#fff"/><path d="M11 0v25M0 11.500h22" stroke="#101010" stroke-width="1.500"/><path d="M17 12l7 13H10z" fill="#ffc20e"/><path d="M17 16v5M17 22v2" stroke="#222" stroke-width="1.500"/></svg>
    <svg style="margin-left:11px" width="24" height="24"><use href="#ut"/></svg>
    <svg style="margin-left:16px" width="19" height="20" fill="none" stroke="#fff" stroke-width="1.300"><path d="M1 19Q2 3 18 1" stroke="#999"/><path d="M5 19Q6 7 18 6M9 19q1-7 9-8M13 19q1-3 5-4"/><circle cx="16.500" cy="18" r="1.500" fill="#fff" stroke="none"/></svg>
    <svg style="margin-left:14px" width="23" height="20" fill="none" stroke="#fff" stroke-width="1.300"><path d="M1 7h3l5-5v16l-5-5H1zM12 7q2 3 0 6M15 5q4 5 0 10"/><path d="M18 2q6 8 0 16" stroke="#777"/></svg>
    <div class="clock text-center"><div>7:06 PM</div><div>16-Jul-21</div></div>
    <svg style="margin-left:25px" width="26" height="26" fill="none" stroke="#fff" stroke-width="1.500"><path d="M1 1h23v18h-7l-5 5-5-5H1z"/></svg>
  </div>
  <div class="ms-auto h-100" style="width:2px;background:#777;margin-right:7px"></div>
</footer>
<script src="https://cdn.jsdelivr.net/npm/bootstrap@5.3.0/dist/js/bootstrap.bundle.min.js"></script>
</body>
</html>
